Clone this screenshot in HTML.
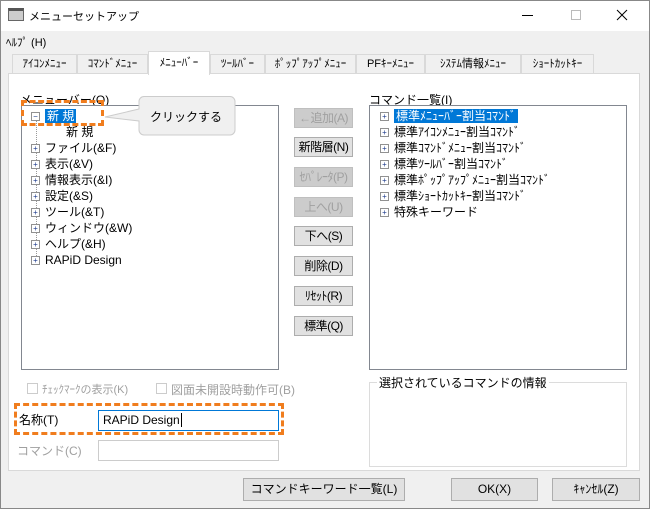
<!DOCTYPE html>
<html><head><meta charset="utf-8"><style>
*{box-sizing:border-box;margin:0;padding:0}
body{width:650px;height:509px;background:#fff;font-family:"Liberation Sans","Noto Sans CJK JP",sans-serif;font-size:12px;color:#000;position:relative;overflow:hidden}
.abs{position:absolute}
.win{left:0;top:0;width:650px;height:509px;border:1px solid #888;background:#f0f0f0}
.title{left:1px;top:1px;width:648px;height:30px;background:#fff}
.tabs{top:54px;height:20px}
.tab{position:absolute;top:0;height:20px;border:1px solid #d9d9d9;border-bottom:none;background:#f0f0f0;font-size:11px;line-height:18px;text-align:center;white-space:nowrap;overflow:hidden}
.panel{left:8px;top:73px;width:632px;height:398px;background:#fff;border:1px solid #d9d9d9}
.box{background:#fff;border:1px solid #828790}
.btn{position:absolute;left:294px;width:59px;height:20px;border:1px solid #adadad;background:#e1e1e1;text-align:center;line-height:18px;font-size:12px;letter-spacing:-0.5px;white-space:nowrap}
.dis{color:#a0a0a0;background:#ccc;border-color:#bfbfbf}
.item{position:absolute;height:16px;line-height:16px;white-space:nowrap}
.pm{display:inline-block;width:9px;height:9px;border:1px solid #919191;font-size:8px;line-height:7px;text-align:center;color:#1e3c8c;vertical-align:middle;margin-right:5px;background:#fff}
.sel{background:#0078d7;color:#fff;padding:0 2px}
.dash{border:3px dashed #f07d1e}
.bb{position:absolute;top:478px;height:23px;border:1px solid #adadad;background:#e1e1e1;text-align:center;line-height:21px}
</style></head><body>
<div class="abs win"></div>
<div class="abs title"></div>
<div class="abs" style="left:8px;top:8px;width:16px;height:13px;border:1px solid #666;background:#ccc;border-top:3px solid #555"></div>
<div class="abs" style="left:29px;top:8px;font-size:11px">メニューセットアップ</div>
<div class="abs" style="left:522px;top:15px;width:11px;height:1px;background:#000"></div>
<div class="abs" style="left:571px;top:10px;width:10px;height:10px;border:1px solid #bbb"></div>
<svg class="abs" style="left:616px;top:9px" width="12" height="12"><path d="M1 1L11 11M11 1L1 11" stroke="#000" stroke-width="1"/></svg>
<div class="abs" style="left:6px;top:34px;font-size:11px">ﾍﾙﾌﾟ (H)</div>
<div class="abs tabs" style="left:0;width:650px">
<div class="tab" style="left:12px;width:65px">ｱｲｺﾝﾒﾆｭｰ</div>
<div class="tab" style="left:77px;width:71px">ｺﾏﾝﾄﾞﾒﾆｭｰ</div>
<div class="tab" style="left:148px;width:62px;top:-3px;height:24px;line-height:22px;background:#fff;z-index:2">ﾒﾆｭｰﾊﾞｰ</div>
<div class="tab" style="left:210px;width:55px">ﾂｰﾙﾊﾞｰ</div>
<div class="tab" style="left:265px;width:91px">ﾎﾟｯﾌﾟｱｯﾌﾟﾒﾆｭｰ</div>
<div class="tab" style="left:356px;width:69px">PFｷｰﾒﾆｭｰ</div>
<div class="tab" style="left:425px;width:96px">ｼｽﾃﾑ情報ﾒﾆｭｰ</div>
<div class="tab" style="left:521px;width:73px">ｼｮｰﾄｶｯﾄｷｰ</div>
</div>
<div class="abs panel"></div>
<div class="abs" style="left:20px;top:91px">メニューバー(O)</div>
<div class="abs box" style="left:21px;top:105px;width:258px;height:265px"></div>
<div class="abs" style="left:36px;top:120px;width:1px;height:140px;border-left:1px dotted #999"></div>
<div class="item" style="left:31px;top:108px"><span class="pm">−</span><span class="sel">新 規</span></div>
<div class="item" style="left:66px;top:124px">新 規</div>
<div class="item" style="left:31px;top:140px"><span class="pm">+</span>ファイル(&amp;F)</div>
<div class="item" style="left:31px;top:156px"><span class="pm">+</span>表示(&amp;V)</div>
<div class="item" style="left:31px;top:172px"><span class="pm">+</span>情報表示(&amp;I)</div>
<div class="item" style="left:31px;top:188px"><span class="pm">+</span>設定(&amp;S)</div>
<div class="item" style="left:31px;top:204px"><span class="pm">+</span>ツール(&amp;T)</div>
<div class="item" style="left:31px;top:220px"><span class="pm">+</span>ウィンドウ(&amp;W)</div>
<div class="item" style="left:31px;top:236px"><span class="pm">+</span>ヘルプ(&amp;H)</div>
<div class="item" style="left:31px;top:252px"><span class="pm">+</span>RAPiD Design</div>
<div class="abs dash" style="left:21px;top:100px;width:83px;height:26px"></div>
<svg class="abs" style="left:100px;top:95px" width="140" height="42"><path d="M44 1.5H130a5 5 0 0 1 5 5V35a5 5 0 0 1-5 5H44a5 5 0 0 1-5-5V26L5 22 39 14V6.5a5 5 0 0 1 5-5z" fill="#f0f0f0" stroke="#ccc"/></svg>
<div class="abs" style="left:150px;top:108px;font-size:12px">クリックする</div>
<div class="btn dis" style="top:108px">←追加(A)</div>
<div class="btn" style="top:137px">新階層(N)</div>
<div class="btn dis" style="top:167px">ｾﾊﾟﾚｰﾀ(P)</div>
<div class="btn dis" style="top:197px">上へ(U)</div>
<div class="btn" style="top:226px">下へ(S)</div>
<div class="btn" style="top:256px">削除(D)</div>
<div class="btn" style="top:286px">ﾘｾｯﾄ(R)</div>
<div class="btn" style="top:316px">標準(Q)</div>
<div class="abs" style="left:369px;top:91px">コマンド一覧(I)</div>
<div class="abs box" style="left:369px;top:105px;width:258px;height:265px"></div>
<div class="item" style="left:380px;top:108px"><span class="pm">+</span><span class="sel">標準ﾒﾆｭｰﾊﾞｰ割当ｺﾏﾝﾄﾞ</span></div>
<div class="item" style="left:380px;top:124px"><span class="pm">+</span>標準ｱｲｺﾝﾒﾆｭｰ割当ｺﾏﾝﾄﾞ</div>
<div class="item" style="left:380px;top:140px"><span class="pm">+</span>標準ｺﾏﾝﾄﾞﾒﾆｭｰ割当ｺﾏﾝﾄﾞ</div>
<div class="item" style="left:380px;top:156px"><span class="pm">+</span>標準ﾂｰﾙﾊﾞｰ割当ｺﾏﾝﾄﾞ</div>
<div class="item" style="left:380px;top:172px"><span class="pm">+</span>標準ﾎﾟｯﾌﾟｱｯﾌﾟﾒﾆｭｰ割当ｺﾏﾝﾄﾞ</div>
<div class="item" style="left:380px;top:188px"><span class="pm">+</span>標準ｼｮｰﾄｶｯﾄｷｰ割当ｺﾏﾝﾄﾞ</div>
<div class="item" style="left:380px;top:204px"><span class="pm">+</span>特殊キーワード</div>
<div class="abs" style="left:27px;top:383px;width:11px;height:11px;border:1px solid #ccc"></div>
<div class="abs" style="left:42px;top:381px;color:#a0a0a0;font-size:11px">ﾁｪｯｸﾏｰｸの表示(K)</div>
<div class="abs" style="left:156px;top:383px;width:11px;height:11px;border:1px solid #ccc"></div>
<div class="abs" style="left:171px;top:381px;color:#a0a0a0">図面未開設時動作可(B)</div>
<div class="abs" style="left:369px;top:382px;width:258px;height:85px;border:1px solid #dcdcdc"></div>
<div class="abs" style="left:377px;top:374px;background:#fff;padding:0 2px">選択されているコマンドの情報</div>
<div class="abs" style="left:19px;top:411px">名称(T)</div>
<div class="abs" style="left:98px;top:410px;width:181px;height:21px;border:1px solid #0078d7;background:#fff;padding-left:4px;line-height:19px">RAPiD Design<span style="border-left:1px solid #000;margin-left:1px"></span></div>
<div class="abs dash" style="left:14px;top:403px;width:270px;height:32px"></div>
<div class="abs" style="left:17px;top:442px;color:#a0a0a0">コマンド(C)</div>
<div class="abs" style="left:98px;top:440px;width:181px;height:21px;border:1px solid #ccc;background:#fff"></div>
<div class="bb" style="left:243px;width:162px">コマンドキーワード一覧(L)</div>
<div class="bb" style="left:451px;width:87px">OK(X)</div>
<div class="bb" style="left:552px;width:88px">ｷｬﾝｾﾙ(Z)</div>
</body></html>
